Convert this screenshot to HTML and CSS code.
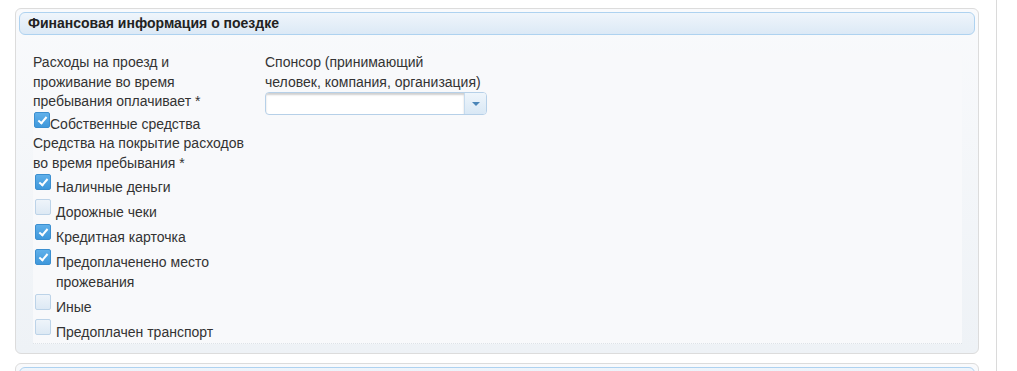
FILE: index.html
```html
<!DOCTYPE html>
<html lang="ru">
<head>
  <meta charset="UTF-8">
  <title>Финансовая информация о поездке</title>
  <link rel="stylesheet" href="styles.css">
</head>
<body>
  <div class="page">
    <div class="main">
      <div class="panel">
        <div class="panel-head">Финансовая информация о поездке</div>
        <div class="panel-body">
          <div class="col-left">
            <div class="field-label">Расходы на проезд и проживание во время пребывания оплачивает *</div>
            <div class="inline-opt"><span class="cb checked"></span>Собственные средства</div>
            <div class="field-label">Средства на покрытие расходов во время пребывания *</div>
            <div class="opt"><span class="cb checked"></span><span class="opt-text">Наличные деньги</span></div>
            <div class="opt"><span class="cb"></span><span class="opt-text">Дорожные чеки</span></div>
            <div class="opt"><span class="cb checked"></span><span class="opt-text">Кредитная карточка</span></div>
            <div class="opt"><span class="cb checked"></span><span class="opt-text">Предоплаченено место прожевания</span></div>
            <div class="opt"><span class="cb"></span><span class="opt-text">Иные</span></div>
            <div class="opt"><span class="cb"></span><span class="opt-text">Предоплачен транспорт</span></div>
          </div>
          <div class="col-right">
            <div class="field-label sponsor">Спонсор (принимающий<br>человек, компания, организация)</div>
            <div class="select">
              <div class="select-value"></div>
              <div class="select-btn"><span class="arrow"></span></div>
            </div>
          </div>
        </div>
      </div>
      <div class="panel next">
        <div class="panel-head"></div>
      </div>
    </div>
  </div>
</body>
</html>
```
FILE: styles.css
```css
body {
  margin: 0;
  background: #fff;
  font-family: "Liberation Sans", Arial, sans-serif;
  font-size: 14px;
  color: #333;
}

.page {
  display: flex;
  height: 371px;
  overflow: hidden;
}

.main {
  width: 964px;
  padding: 8px 17px 0 15px;
  border-right: 1px solid #dadada;
}

.panel {
  border: 1px solid #dcdcdc;
  border-radius: 6px;
  padding: 3px 3px 9px 3px;
  background: linear-gradient(#f9fafc, #eef2f6);
}

.panel.next {
  margin-top: 9px;
  height: 40px;
}

.panel-head {
  height: 21px;
  line-height: 21px;
  padding-left: 8px;
  border: 1px solid #aed2f0;
  border-radius: 6px;
  background: linear-gradient(#eff5fb, #dce9f6);
  font-weight: bold;
  color: #222;
}

.panel-body {
  display: flex;
  gap: 14px;
  margin: 18px 13px 0 14px;
  background: #f8f9fb;
  border-bottom: 1px dotted #dde2e7;
}

.col-left {
  width: 218px;
}

.field-label {
  line-height: 19.5px;
}

.sponsor {
  white-space: nowrap;
}

.inline-opt {
  line-height: 19.5px;
}

.cb {
  display: inline-block;
  box-sizing: border-box;
  width: 16px;
  height: 16px;
  border: 1px solid #bcd3e8;
  border-radius: 2px;
  background: linear-gradient(#eef4fa, #dde9f4);
  position: relative;
}

.cb.checked {
  border-color: #3b8fd0;
  background: linear-gradient(#60b0ea, #3f98db);
}

.cb.checked::after {
  content: "";
  position: absolute;
  left: 5px;
  top: 2px;
  width: 3px;
  height: 7px;
  border: solid #fff;
  border-width: 0 2px 2px 0;
  transform: rotate(40deg);
}

.inline-opt .cb {
  margin: 0 0 1px 1px;
  vertical-align: baseline;
}

.opt {
  display: flex;
  align-items: flex-start;
  margin-bottom: 0.5px;
}

.opt .cb {
  flex: none;
  margin: 1px 5px 0 2px;
}

.opt-text {
  padding-top: 5px;
  line-height: 19.5px;
}

.col-right {
  width: 222px;
}

.select {
  display: flex;
  height: 21px;
  border: 1px solid #b6d0e8;
  border-radius: 4px;
  background: #fff;
  overflow: hidden;
}

.select-value {
  flex: 1;
  box-shadow: inset 0 2px 2px #d0d0d0;
}

.select-btn {
  width: 21px;
  border-left: 1px solid #c6dbee;
  background: linear-gradient(#eef5fb, #d9e8f5);
  display: flex;
  align-items: center;
  justify-content: center;
}

.arrow {
  width: 0;
  height: 0;
  border-left: 4px solid transparent;
  border-right: 4px solid transparent;
  border-top: 4px solid #4a85b8;
}
```
